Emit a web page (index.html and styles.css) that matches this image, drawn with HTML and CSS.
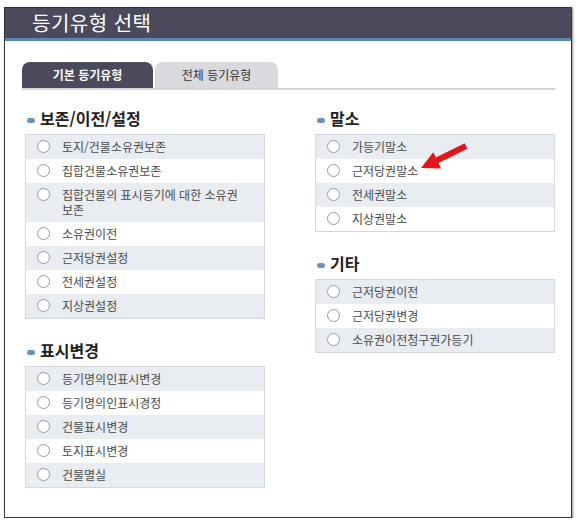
FILE: index.html
```html
<!DOCTYPE html>
<html lang="ko">
<head>
    <meta charset="UTF-8">
    <title>등기유형 선택</title>
    <link rel="stylesheet" href="styles.css">
</head>
<body>
    <div class="frame">
        <div class="title">등기유형 선택</div>
        <div class="content">
            <div class="tabs">
                <div class="tab active">기본 등기유형</div>
                <div class="tab">전체 등기유형</div>
            </div>

            <div class="columns">
                <div class="column">
                    <div class="section">
                        <div class="heading">보존/이전/설정</div>
                        <ul class="list">
                            <li><span class="radio"></span><span class="label">토지/건물소유권보존</span></li>
                            <li><span class="radio"></span><span class="label">집합건물소유권보존</span></li>
                            <li><span class="radio"></span><span class="label">집합건물의 표시등기에 대한 소유권 보존</span></li>
                            <li><span class="radio"></span><span class="label">소유권이전</span></li>
                            <li><span class="radio"></span><span class="label">근저당권설정</span></li>
                            <li><span class="radio"></span><span class="label">전세권설정</span></li>
                            <li><span class="radio"></span><span class="label">지상권설정</span></li>
                        </ul>
                    </div>
                    <div class="section">
                        <div class="heading">표시변경</div>
                        <ul class="list">
                            <li><span class="radio"></span><span class="label">등기명의인표시변경</span></li>
                            <li><span class="radio"></span><span class="label">등기명의인표시경정</span></li>
                            <li><span class="radio"></span><span class="label">건물표시변경</span></li>
                            <li><span class="radio"></span><span class="label">토지표시변경</span></li>
                            <li><span class="radio"></span><span class="label">건물멸실</span></li>
                        </ul>
                    </div>
                </div>

                <div class="column">
                    <div class="section">
                        <div class="heading">말소</div>
                        <ul class="list">
                            <li><span class="radio"></span><span class="label">가등기말소</span></li>
                            <li class="marked">
                                <span class="radio"></span><span class="label">근저당권말소</span>
                                <svg class="arrow" width="50" height="30" viewBox="0 0 50 30">
                                    <polygon points="3,25 23.1,25.4 20.5,20 49.3,5.7 46.7,0.3 17.9,14.6 15.3,9.2" fill="#e3141c"/>
                                </svg>
                            </li>
                            <li><span class="radio"></span><span class="label">전세권말소</span></li>
                            <li><span class="radio"></span><span class="label">지상권말소</span></li>
                        </ul>
                    </div>
                    <div class="section">
                        <div class="heading">기타</div>
                        <ul class="list">
                            <li><span class="radio"></span><span class="label">근저당권이전</span></li>
                            <li><span class="radio"></span><span class="label">근저당권변경</span></li>
                            <li><span class="radio"></span><span class="label">소유권이전청구권가등기</span></li>
                        </ul>
                    </div>
                </div>
            </div>
        </div>
    </div>
</body>
</html>
```

FILE: styles.css
```css
body {
    margin: 0;
    background: #fff;
    font-family: "Noto Sans CJK KR", "Noto Sans", sans-serif;
    color: #222;
}

.frame {
    box-sizing: border-box;
    width: 568px;
    height: 511px;
    margin: 7px 0 0 4px;
    border: 1px solid #333;
    box-shadow: 1px 1px 2px rgba(0,0,0,0.45);
}

.title {
    height: 30px;
    line-height: 30px;
    padding-left: 27px;
    background: #4a4a5c;
    border-bottom: 3px solid #5d89b0;
    color: #fff;
    font-size: 20px;
    letter-spacing: 0.5px;
}

.content {
    padding: 21px 16px 0 17px;
}

.tabs {
    display: flex;
    gap: 2px;
    border-bottom: 2px solid #d6d6d8;
}

.tab {
    width: 123px;
    height: 26px;
    line-height: 26px;
    text-align: center;
    font-size: 12px;
    color: #333;
    background: #d9d9de;
    border-radius: 8px 8px 0 0;
}

.tab.active {
    width: 131px;
    background: #4a4a5c;
    color: #fff;
    font-weight: bold;
}

.columns {
    display: grid;
    grid-template-columns: 240px 240px;
    column-gap: 50px;
    padding: 17px 0 0 3px;
}

.section + .section {
    margin-top: 20px;
}

.heading {
    height: 22px;
    line-height: 22px;
    margin-bottom: 5px;
    padding-left: 2px;
    font-size: 16px;
    font-weight: bold;
    color: #222;
}

.heading::before {
    content: "";
    display: inline-block;
    width: 8px;
    height: 5px;
    margin-right: 5px;
    vertical-align: middle;
    border-radius: 3px;
    background: #6b93b5;
}

.list {
    list-style: none;
    margin: 0;
    padding: 0;
    border: 1px solid #d3d8de;
}

.list li {
    display: flex;
    align-items: flex-start;
    padding: 4px 0 5px 11px;
    line-height: 15px;
    font-size: 12px;
    color: #4a4a4a;
    background: #fff;
}

.list li:nth-child(odd) {
    background: #e9edf2;
}

.radio {
    flex: none;
    width: 13px;
    height: 13px;
    margin: 1px 12px 0 0;
    box-sizing: border-box;
    border: 1px solid #999;
    border-radius: 50%;
    background: #fff;
}

.label {
    max-width: 185px;
    word-break: keep-all;
}

.marked {
    position: relative;
}

.arrow {
    position: absolute;
    left: 102px;
    top: -16px;
}
```
